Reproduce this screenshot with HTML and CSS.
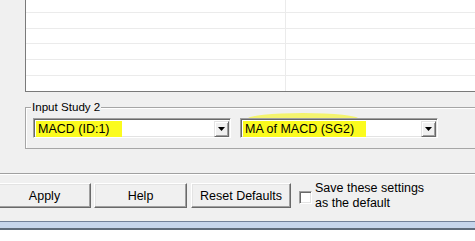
FILE: index.html
```html
<!DOCTYPE html>
<html lang="en">
<head>
<meta charset="UTF-8" />
<title>Study Settings</title>
<link rel="stylesheet" href="styles.css">
</head>
<body>
<div class="window">
  <div class="list">
    <div class="cell"></div><div class="cell"></div>
    <div class="cell"></div><div class="cell"></div>
    <div class="cell"></div><div class="cell"></div>
    <div class="cell"></div><div class="cell"></div>
    <div class="cell"></div><div class="cell"></div>
    <div class="cell"></div><div class="cell"></div>
  </div>

  <div class="group">
    <div class="group-title">Input Study 2</div>
    <div class="combos">
      <div class="combo">
        <span class="combo-text"><span class="mark">MACD (ID:1)</span></span>
        <span class="combo-btn"><span class="arrow"></span></span>
      </div>
      <div class="combo bleed">
        <span class="combo-text"><span class="mark">MA of MACD (SG2)</span></span>
        <span class="combo-btn"><span class="arrow"></span></span>
      </div>
    </div>
  </div>

  <div class="separator"></div>

  <div class="actions">
    <button class="btn btn-apply" type="button">Apply</button>
    <button class="btn btn-help" type="button">Help</button>
    <button class="btn btn-reset" type="button">Reset Defaults</button>
    <label class="save">
      <span class="check"></span>
      <span class="save-text">Save these settings<br>as the default</span>
    </label>
  </div>

  <div class="taskbar"></div>
  <div class="desk"></div>
</div>
</body>
</html>
```

FILE: styles.css
```css
body {
  margin: 0;
  background: #f0f0f0;
  font-family: "Liberation Sans", Arial, sans-serif;
  color: #000;
  overflow: hidden;
}
.window {
  width: 475px;
  height: 241px;
  display: flex;
  flex-direction: column;
}

/* list view at the top */
.list {
  margin-left: 25px;
  height: 91px;
  flex-shrink: 0;
  background: #fff;
  border-left: 1px solid #7a7a7a;
  border-bottom: 1px solid #7a7a7a;
  display: grid;
  grid-template-columns: 260px 1fr;
  grid-template-rows: 13px 16px 15px 16px 16px 15px;
}
.cell {
  box-sizing: border-box;
  border-bottom: 1px solid #ebebeb;
}
.cell:nth-child(odd) {
  border-right: 1px solid #ebebeb;
}
.cell:nth-last-child(-n+2) {
  border-bottom: none;
}

/* group box */
.group {
  margin: 15px 0 0 25px;
  padding: 0 0 10px 7px;
  border: 1px solid #a6a6a6;
  border-right: none;
  box-shadow: inset 1px 1px #fff;
}
.group-title {
  width: max-content;
  margin: -8px 0 0 -2px;
  padding: 0 1px;
  font-size: 11.6px;
  line-height: 14px;
  background: #f0f0f0;
}
.combos {
  display: flex;
  gap: 9px;
  margin-top: 4px;
}
.combo {
  position: relative;
  width: 198px;
  height: 20px;
  box-sizing: border-box;
  padding: 2px 1px 1px 2px;
  display: flex;
  background: #fff;
  border: 1px solid;
  border-color: #a0a0a0 #fff #fff #a0a0a0;
  box-shadow: inset 1px 1px #696969, inset -1px -1px #e3e3e3;
}
.bleed::before {
  content: "";
  position: absolute;
  left: 6px;
  top: -6px;
  width: 112px;
  height: 12px;
  border-radius: 50%;
  background: #f4f46e;
  z-index: -1;
}
.combo-text {
  flex: 1;
  font-size: 12.5px;
  line-height: 16px;
}
.mark {
  display: inline-block;
  height: 16px;
  padding: 0 12px 0 2px;
  background: #fbfb1e;
}
.combo-btn {
  width: 15px;
  height: 16px;
  box-sizing: border-box;
  display: flex;
  align-items: center;
  justify-content: center;
  background: #f0f0f0;
  border: 1px solid;
  border-color: #e3e3e3 #696969 #696969 #e3e3e3;
  box-shadow: inset 1px 1px #fff, inset -1px -1px #a0a0a0;
}
.arrow {
  width: 7px;
  height: 4px;
  background: #000;
  clip-path: polygon(0 0, 100% 0, 50% 100%);
}

.separator {
  margin-top: 24px;
  height: 1px;
  flex-shrink: 0;
  background: #a0a0a0;
  border-bottom: 1px solid #fff;
}

/* bottom buttons */
.actions {
  display: flex;
  align-items: center;
  height: 25px;
  flex-shrink: 0;
  margin: 8px 0 0 -2px;
}
.btn {
  height: 25px;
  padding: 0;
  font-family: inherit;
  font-size: 12.5px;
  color: #000;
  background: #f0f0f0;
  border: 1px solid;
  border-color: #fff #696969 #696969 #fff;
  box-shadow: inset -1px -1px #a0a0a0, inset 1px 1px #e3e3e3;
}
.btn-apply {
  width: 93px;
}
.btn-help {
  width: 93px;
  margin-left: 3px;
}
.btn-reset {
  width: 100px;
  margin-left: 4px;
}
.save {
  display: flex;
  align-items: center;
  margin-left: 8px;
  font-size: 12.5px;
  line-height: 14.5px;
}
.check {
  width: 13px;
  height: 13px;
  box-sizing: border-box;
  margin: 3px 3px 0 0;
  background: #fff;
  border: 1px solid;
  border-color: #a0a0a0 #fff #fff #a0a0a0;
  box-shadow: inset 1px 1px #696969, inset -1px -1px #e3e3e3;
}

.taskbar {
  margin-top: 13px;
  height: 6px;
  flex-shrink: 0;
  background: #c6d5ec;
  border-top: 1px solid #73819a;
  border-bottom: 2px solid #5f6b7b;
}
.desk {
  flex: 1;
  background: #fff;
}
```
